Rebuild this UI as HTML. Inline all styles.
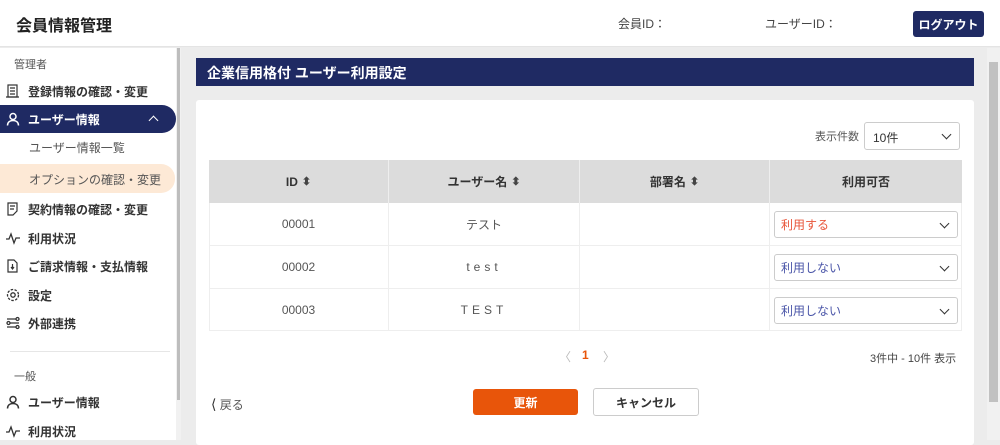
<!DOCTYPE html>
<html><head><meta charset="utf-8"><style>
*{box-sizing:border-box;margin:0;padding:0}
body{width:1000px;height:440px;overflow:hidden;background:#ececec;font-family:"Liberation Sans","Noto Sans CJK JP",sans-serif;color:#333;position:relative}
.a{position:absolute}
.hdr{left:0;top:0;width:1000px;height:47px;background:#fff;border-bottom:1px solid #e4e4e4}
.side{left:0;top:48px;width:176px;height:392px;background:#fff}
.si{position:absolute;left:0;width:176px;height:28px;font-size:12px;font-weight:bold;color:#333;display:flex;align-items:center;padding-left:28px}
.si svg{position:absolute;left:6px;top:7px}
.th{position:absolute;top:160px;height:43px;background:#dcdcdc;font-size:12px;font-weight:bold;color:#333;display:flex;align-items:center;justify-content:center;border-right:1px solid #eee}
.td{position:absolute;height:42px;font-size:12px;color:#555;display:flex;align-items:center;justify-content:center;border-right:1px solid #eee;border-bottom:1px solid #eee}
.sel{position:absolute;left:774px;width:184px;height:27px;border:1px solid #ccc;border-radius:3px;font-size:12px;padding-left:6px;display:flex;align-items:center}
.chev{position:absolute;right:9px;top:8px;width:7px;height:7px;border-right:1.5px solid #333;border-bottom:1.5px solid #333;transform:rotate(45deg)}
.sort{font-size:11px;margin-left:4px;color:#444}
</style></head><body>
<div class="a hdr">
<div class="a" style="left:16px;top:12px;font-size:16px;font-weight:bold;color:#222">会員情報管理</div>
<div class="a" style="left:618px;top:15px;font-size:12px;color:#444">会員ID：</div>
<div class="a" style="left:765px;top:15px;font-size:12px;color:#444">ユーザーID：</div>
<div class="a" style="left:913px;top:11px;width:71px;height:26px;background:#1f2a63;border-radius:3px;color:#fff;font-size:12px;font-weight:bold;display:flex;align-items:center;justify-content:center">ログアウト</div>
</div>
<div class="a side">
<div class="a" style="left:14px;top:8px;font-size:11px;color:#555">管理者</div>
<div class="si" style="top:29px"><svg width="13" height="14" viewBox="0 0 13 14" fill="none" stroke="#333" stroke-width="1.2"><rect x="2" y="1" width="9" height="12"/><path d="M4 4h5M4 7h5M4 10h5M0 13h13"/></svg>登録情報の確認・変更</div>
<div class="si" style="top:57px;background:#1f2a63;color:#fff;border-radius:0 14px 14px 0"><svg width="14" height="14" viewBox="0 0 14 14" fill="none" stroke="#fff" stroke-width="1.5"><circle cx="7" cy="4.5" r="3"/><path d="M1.5 13.5c0-3.5 2.5-5 5.5-5s5.5 1.5 5.5 5"/></svg>ユーザー情報<span style="position:absolute;left:150px;top:12px;width:7px;height:7px;border-left:1.8px solid #fff;border-top:1.8px solid #fff;transform:rotate(45deg)"></span></div>
<div class="a" style="left:29px;top:91px;font-size:12px;color:#555">ユーザー情報一覧</div>
<div class="a" style="left:0;top:116px;width:175px;height:29px;background:#fde9d6;border-radius:0 14px 14px 0"></div>
<div class="a" style="left:29px;top:123px;font-size:12px;color:#555">オプションの確認・変更</div>
<div class="si" style="top:147px"><svg width="13" height="14" viewBox="0 0 13 14" fill="none" stroke="#333" stroke-width="1.2"><path d="M2 1h9v8l-4 4H2z M4 4h5M4 7h4"/></svg>契約情報の確認・変更</div>
<div class="si" style="top:176px"><svg width="14" height="14" viewBox="0 0 14 14" fill="none" stroke="#333" stroke-width="1.3"><path d="M0 8h3l2-5 3 9 2-5h4"/></svg>利用状況</div>
<div class="si" style="top:204px"><svg width="13" height="14" viewBox="0 0 13 14" fill="none" stroke="#333" stroke-width="1.2"><path d="M2 1h6l3 3v9H2z M6.5 5v5M5 8l1.5 2 1.5-2"/></svg>ご請求情報・支払情報</div>
<div class="si" style="top:233px"><svg width="14" height="14" viewBox="0 0 14 14" fill="none" stroke="#333" stroke-width="1.3"><circle cx="7" cy="7" r="2.2"/><circle cx="7" cy="7" r="5.5" stroke-dasharray="2.5 1.4"/></svg>設定</div>
<div class="si" style="top:261px"><svg width="14" height="14" viewBox="0 0 14 14" fill="none" stroke="#333" stroke-width="1.3"><path d="M1 3h9M4 7h9M1 11h9"/><circle cx="11.5" cy="3" r="1.5"/><circle cx="2.5" cy="7" r="1.5"/><circle cx="11.5" cy="11" r="1.5"/></svg>外部連携</div>
<div class="a" style="left:10px;top:303px;width:160px;height:1px;background:#e6e6e6"></div>
<div class="a" style="left:14px;top:320px;font-size:11px;color:#555">一般</div>
<div class="si" style="top:340px"><svg width="14" height="14" viewBox="0 0 14 14" fill="none" stroke="#333" stroke-width="1.5"><circle cx="7" cy="4.5" r="3"/><path d="M1.5 13.5c0-3.5 2.5-5 5.5-5s5.5 1.5 5.5 5"/></svg>ユーザー情報</div>
<div class="si" style="top:369px"><svg width="14" height="14" viewBox="0 0 14 14" fill="none" stroke="#333" stroke-width="1.3"><path d="M0 8h3l2-5 3 9 2-5h4"/></svg>利用状況</div>
</div>
<div class="a" style="left:176px;top:48px;width:5px;height:392px;background:#f1f1f1"></div>
<div class="a" style="left:177px;top:48px;width:3px;height:352px;background:#bdbdbd"></div>
<div class="a" style="left:987px;top:48px;width:13px;height:392px;background:#f1f1f1"></div>
<div class="a" style="left:989px;top:62px;width:9px;height:340px;background:#c1c1c1"></div>
<div class="a" style="left:196px;top:58px;width:778px;height:28px;background:#1f2a63;color:#fff;font-size:14px;font-weight:bold;padding:5px 0 0 11px">企業信用格付 ユーザー利用設定</div>
<div class="a" style="left:196px;top:100px;width:778px;height:345px;background:#fff;border-radius:3px"></div>
<div class="a" style="left:815px;top:128px;font-size:11px;color:#555">表示件数</div>
<div class="a" style="left:864px;top:122px;width:96px;height:28px;border:1px solid #ccc;border-radius:3px;font-size:12px;padding:6px 0 0 8px;color:#333">10件<span class="chev" style="top:8px"></span></div>
<div class="th" style="left:209px;width:180px">ID<span class="sort">⬍</span></div>
<div class="th" style="left:389px;width:191px">ユーザー名<span class="sort">⬍</span></div>
<div class="th" style="left:580px;width:190px">部署名<span class="sort">⬍</span></div>
<div class="th" style="left:770px;width:192px;border-right:0">利用可否</div>
<div class="a" style="left:209px;top:203px;width:753px;height:128px;border-left:1px solid #eee;border-right:1px solid #eee"></div>
<div class="td" style="left:209px;top:203px;width:180px;height:43px">00001</div>
<div class="td" style="left:389px;top:203px;width:191px;height:43px">テスト</div>
<div class="td" style="left:580px;top:203px;width:190px;height:43px"></div>
<div class="td" style="left:209px;top:246px;width:180px;height:43px">00002</div>
<div class="td" style="left:389px;top:246px;width:191px;height:43px;letter-spacing:4px">test</div>
<div class="td" style="left:580px;top:246px;width:190px;height:43px"></div>
<div class="td" style="left:209px;top:289px;width:180px;height:42px">00003</div>
<div class="td" style="left:389px;top:289px;width:191px;height:42px;letter-spacing:4px">TEST</div>
<div class="td" style="left:580px;top:289px;width:190px;height:42px"></div>
<div class="a" style="left:770px;top:245px;width:192px;height:1px;background:#eee"></div>
<div class="a" style="left:770px;top:288px;width:192px;height:1px;background:#eee"></div>
<div class="a" style="left:770px;top:330px;width:192px;height:1px;background:#eee"></div>
<div class="sel" style="top:211px;color:#e8553a">利用する<span class="chev"></span></div>
<div class="sel" style="top:254px;color:#4a55a8">利用しない<span class="chev"></span></div>
<div class="sel" style="top:297px;color:#4a55a8">利用しない<span class="chev"></span></div>
<div class="a" style="left:559px;top:348px;font-size:12px;color:#bbb">〈</div>
<div class="a" style="left:582px;top:348px;font-size:12px;color:#e8550a;font-weight:bold">1</div>
<div class="a" style="left:603px;top:348px;font-size:12px;color:#bbb">〉</div>
<div class="a" style="left:870px;top:350px;font-size:11px;color:#444">3件中 - 10件 表示</div>
<div class="a" style="left:211px;top:396px;font-size:12px;color:#555"><span style="font-size:14px;color:#333">&#10216;</span> 戻る</div>
<div class="a" style="left:473px;top:389px;width:105px;height:26px;background:#e8550a;border-radius:3px;color:#fff;font-size:12px;font-weight:bold;display:flex;align-items:center;justify-content:center">更新</div>
<div class="a" style="left:593px;top:388px;width:106px;height:28px;border:1px solid #ccc;border-radius:3px;color:#333;font-size:12px;font-weight:bold;display:flex;align-items:center;justify-content:center">キャンセル</div>
</body></html>
